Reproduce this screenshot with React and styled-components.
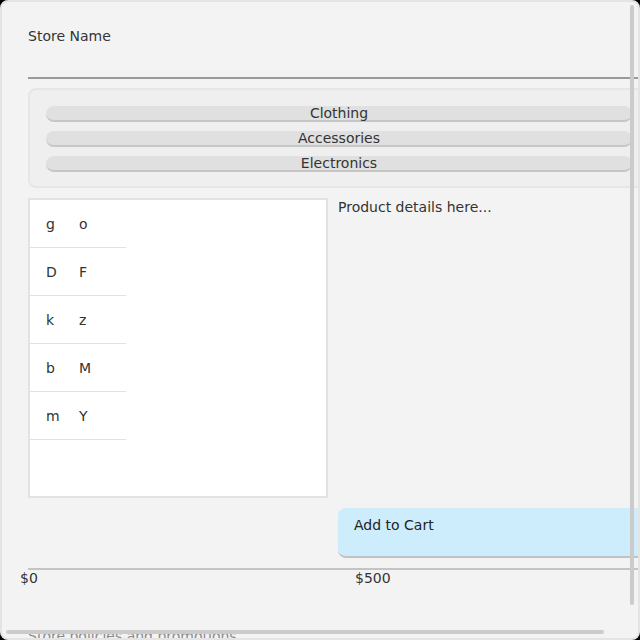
import React from "react";
import styled, { createGlobalStyle } from "styled-components";

const Global = createGlobalStyle`
  html, body { margin: 0; padding: 0; background: #000; }
  #root { width: 640px; height: 640px; }
  * { box-sizing: border-box; }
`;

const Frame = styled.div`
  position: relative;
  width: 640px;
  height: 640px;
  border: 2px solid #e4e4e4;
  border-radius: 8px;
  background: #f3f3f3;
  overflow: hidden;
  font-family: "DejaVu Sans", "Open Sans", sans-serif;
  font-size: 14px;
  color: #333;
`;

const Thumb = styled.div`
  position: absolute;
  background: #cbcbcb;
  border-radius: 2px;
  ${(p) =>
    p.$vertical
      ? "top: 3px; left: 628px; width: 4px; height: 600px;"
      : "left: 4px; top: 628px; height: 4px; width: 598px;"}
`;

const Content = styled.div`
  width: 664px;
  padding: 26px 16px 26px 26px;
  display: flex;
  flex-direction: column;
`;

const Label = styled.label`
  display: block;
  line-height: 17px;
  height: 17px;
`;

const NameInput = styled.div`
  height: 30px;
  margin-top: 4px;
  border-bottom: 2px solid #9a9a9a;
`;

const CategoryBox = styled.div`
  margin-top: 9px;
  border: 2px solid #e6e6e6;
  border-radius: 8px;
  background: #efefef;
  padding: 16px 16px 14px;
  display: flex;
  flex-direction: column;
  gap: 9px;
`;

const Pill = styled.button`
  all: unset;
  box-sizing: border-box;
  height: 16px;
  border-radius: 8px;
  background: #e0e0e0;
  border-bottom: 2px solid #c6c6c6;
  text-align: center;
  font-family: inherit;
  font-size: 14px;
  line-height: 14px;
  color: #333;
`;

const Grid = styled.div`
  margin-top: 10px;
  display: grid;
  grid-template-columns: 300px 1fr;
  column-gap: 10px;
  row-gap: 10px;
`;

const ListBox = styled.div`
  height: 300px;
  background: #fff;
  border: 2px solid #e2e2e2;
`;

const Row = styled.div`
  width: 96px;
  height: 48px;
  padding-left: 16px;
  display: grid;
  grid-template-columns: 33px 1fr;
  align-items: center;
  border-bottom: 1px solid #e2e2e2;
`;

const Details = styled.div`
  line-height: 17px;
  padding-top: 1px;
`;

const CartButton = styled.button`
  all: unset;
  box-sizing: border-box;
  grid-column: 2;
  height: 50px;
  padding: 9px 16px;
  display: flex;
  align-items: flex-start;
  border-radius: 8px;
  background: #cdedfd;
  border-bottom: 2px solid #c2c2c2;
  font-family: inherit;
  font-size: 14px;
  line-height: 17px;
  color: #222;
`;

const Slider = styled.div`
  margin-top: 10px;
  border-top: 2px solid #c4c4c4;
  display: grid;
  grid-template-columns: 310px 1fr;
  line-height: 17px;
`;

const Tick = styled.span`
  margin-left: ${(p) => p.$offset}px;
`;

const Footer = styled.p`
  margin: 41px 0 0;
  line-height: 17px;
  color: #8a8a8a;
`;

const rows = [
  ["g", "o"],
  ["D", "F"],
  ["k", "z"],
  ["b", "M"],
  ["m", "Y"],
];

export default function App() {
  return (
    <>
      <Global />
      <Frame>
        <Content>
          <Label>Store Name</Label>
          <NameInput />
          <CategoryBox>
            <Pill>Clothing</Pill>
            <Pill>Accessories</Pill>
            <Pill>Electronics</Pill>
          </CategoryBox>
          <Grid>
            <ListBox>
              {rows.map(([a, b], i) => (
                <Row key={i}>
                  <span>{a}</span>
                  <span>{b}</span>
                </Row>
              ))}
            </ListBox>
            <Details>Product details here...</Details>
            <CartButton>Add to Cart</CartButton>
          </Grid>
          <Slider>
            <Tick $offset={-8}>$0</Tick>
            <Tick $offset={17}>$500</Tick>
          </Slider>
          <Footer>Store policies and promotions</Footer>
        </Content>
        <Thumb $vertical />
        <Thumb />
      </Frame>
    </>
  );
}
